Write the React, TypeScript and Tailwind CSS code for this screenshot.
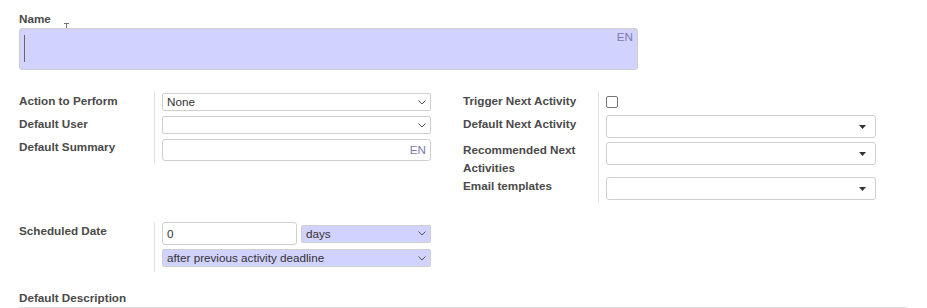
import React from 'react';

const Chevron = () => (
    <svg width="8" height="5" viewBox="0 0 8 5" className="shrink-0">
        <path d="M0.5 0.5 L4 4 L7.5 0.5" fill="none" stroke="#555" strokeWidth="1" />
    </svg>
);

const Caret = () => (
    <svg width="7" height="4" viewBox="0 0 7 4" className="shrink-0">
        <path d="M0 0 H7 L3.5 4 Z" fill="#333" />
    </svg>
);

function SmallSelect({ value, lavender, width }: { value: string; lavender?: boolean; width: string }) {
    return (
        <div className={`${width} h-[18px] flex items-center justify-between pl-[4px] pr-[4px] border border-[#cfcfcf] rounded-[2px] text-[#333] ${lavender ? 'bg-[#d2d2ff]' : 'bg-white'}`}>
            <span className="leading-[16px]">{value}</span>
            <Chevron />
        </div>
    );
}

function BigSelect() {
    return (
        <div className="w-[270px] h-[23px] flex items-center justify-end pr-[9px] border border-[#cfcfcf] rounded-[3px] bg-white">
            <Caret />
        </div>
    );
}

function Label({ children }: { children: React.ReactNode }) {
    return <div className="w-[135px] shrink-0 pr-2 font-bold text-[#4a4a4a] leading-[18px]">{children}</div>;
}

export default function App() {
    return (
        <div className="w-[927px] h-[308px] overflow-hidden bg-white pl-[19px] pt-[11px] font-['Liberation_Sans',Arial,sans-serif] text-[11.7px]">
            {/* Name */}
            <div className="relative h-[16px] font-bold text-[#4a4a4a] leading-[16px]">
                Name
                <svg width="5" height="9" viewBox="0 0 5 9" className="absolute left-[45px] top-[12px]">
                    <path d="M0 0.5 H5 M2.5 0.5 V8.5 M0 8.5 H5" stroke="#777" strokeWidth="1" fill="none" />
                </svg>
            </div>
            <div className="relative mt-[1px] w-[619px] h-[42px] bg-[#d2d2ff] border border-[#cfcfcf] rounded-[3px]">
                <span className="absolute left-[4px] top-[6px] w-[1px] h-[27px] bg-[#666]" />
                <span className="absolute right-[4px] top-0 leading-[16px] text-[#7c7bad]">EN</span>
            </div>

            {/* two groups */}
            <div className="flex items-start mt-[22px]">
                <div className="w-[412px] shrink-0">
                    <div className="flex">
                        <Label>Action to Perform</Label>
                        <div className="border-l border-[#e2e2e2] pl-[7px] pt-[1px] pb-[4px]">
                            <SmallSelect value="None" width="w-[269px]" />
                        </div>
                    </div>
                    <div className="flex">
                        <Label>Default User</Label>
                        <div className="border-l border-[#e2e2e2] pl-[7px] pt-[1px] pb-[4px]">
                            <SmallSelect value="" width="w-[269px]" />
                        </div>
                    </div>
                    <div className="flex">
                        <Label>Default Summary</Label>
                        <div className="border-l border-[#e2e2e2] pl-[7px] pt-[1px] pb-[2px]">
                            <div className="w-[269px] h-[22px] flex items-center justify-end pr-[4px] border border-[#cfcfcf] rounded-[3px] bg-white text-[#7c7bad]">
                                EN
                            </div>
                        </div>
                    </div>
                </div>
                <div className="ml-[32px]">
                    <div className="flex">
                        <Label>Trigger Next Activity</Label>
                        <div className="border-l border-[#e2e2e2] pl-[7px] pt-[4px] h-[23px]">
                            <div className="w-[12px] h-[12px] border border-[#767676] rounded-[2px] bg-white" />
                        </div>
                    </div>
                    <div className="flex">
                        <Label>Default Next Activity</Label>
                        <div className="border-l border-[#e2e2e2] pl-[7px] pb-[3px]">
                            <BigSelect />
                        </div>
                    </div>
                    <div className="flex">
                        <Label>Recommended Next Activities</Label>
                        <div className="border-l border-[#e2e2e2] pl-[7px] pt-[1px] h-[36px]">
                            <BigSelect />
                        </div>
                    </div>
                    <div className="flex">
                        <Label>Email templates</Label>
                        <div className="border-l border-[#e2e2e2] pl-[7px] pb-[3px]">
                            <BigSelect />
                        </div>
                    </div>
                </div>
            </div>

            {/* Scheduled Date */}
            <div className="flex mt-[19px]">
                <Label>Scheduled Date</Label>
                <div className="border-l border-[#e2e2e2] pl-[7px] pb-[5px]">
                    <div className="flex items-center gap-[4px]">
                        <div className="w-[135px] h-[23px] flex items-center pl-[4px] border border-[#cfcfcf] rounded-[3px] bg-white text-[#333]">
                            0
                        </div>
                        <SmallSelect value="days" lavender width="w-[130px]" />
                    </div>
                    <div className="mt-[4px]">
                        <SmallSelect value="after previous activity deadline" lavender width="w-[269px]" />
                    </div>
                </div>
            </div>

            {/* Default Description */}
            <div className="mt-[17px] w-[888px] border-b border-[#dedede] font-bold text-[#4a4a4a] leading-[18px]">
                Default Description
            </div>
        </div>
    );
}
